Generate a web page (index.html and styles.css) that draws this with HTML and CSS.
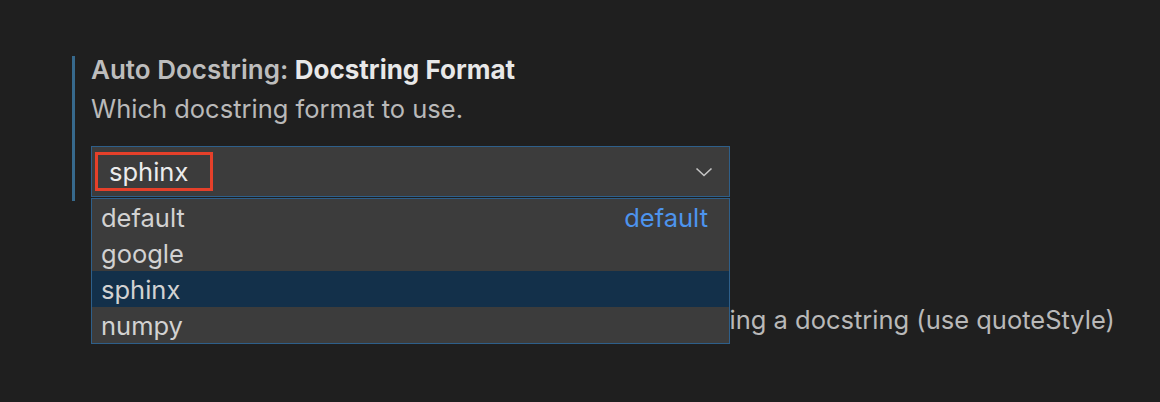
FILE: index.html
```html
<!DOCTYPE html>
<html lang="en">
<head>
<meta charset="utf-8">
<title>Settings</title>
<link rel="stylesheet" href="styles.css">
</head>
<body>
<div class="settings">
  <div class="setting focused">
    <div class="title"><span class="cat">Auto Docstring: </span><span class="name">Docstring Format</span></div>
    <div class="desc">Which docstring format to use.</div>
    <div class="select-wrap">
      <div class="select">
        <span class="mark"><span class="value">sphinx</span></span>
        <svg class="chev" width="18" height="10" viewBox="0 0 18 10"><path d="M1.5 1.5 L9 8.5 L16.5 1.5" fill="none" stroke="#c5c5c5" stroke-width="1.6"/></svg>
      </div>
      <ul class="dropdown">
        <li class="opt"><span>default</span><span class="tag">default</span></li>
        <li class="opt"><span>google</span></li>
        <li class="opt selected"><span>sphinx</span></li>
        <li class="opt"><span>numpy</span></li>
      </ul>
    </div>
  </div>
  <div class="setting">
    <div class="title"><span class="cat">Auto Docstring: </span><span class="name">Generate Docstring On Enter</span></div>
    <div class="bool"><span class="checkbox"></span><span class="desc">Generate docstring on pressing enter after opening a docstring (use quoteStyle)</span></div>
  </div>
</div>
</body>
</html>
```
FILE: styles.css
```css
html, body {
  margin: 0;
  padding: 0;
  background: #1f1f1f;
  height: 100%;
  overflow: hidden;
}
body {
  font-family: Inter, "Noto Sans", "Liberation Sans", sans-serif;
  color: #cccccc;
}
.settings {
  padding-top: 56px;
  padding-left: 72px;
  width: 1080px;
}
.setting {
  border-left: 3px solid transparent;
  padding-left: 16px;
  padding-bottom: 4px;
}
.setting.focused {
  border-left-color: #37698c;
}
.title {
  font-size: 26px;
  line-height: 28px;
  height: 28px;
  font-weight: 600;
  white-space: nowrap;
}
.cat {
  color: #bdbdbd;
}
.name {
  color: #e8e8e8;
  font-weight: 700;
}
.desc {
  font-size: 25.5px;
  line-height: 30px;
  color: #b9b9b9;
  margin-top: 10px;
  white-space: nowrap;
}
.select-wrap {
  position: relative;
  width: 639px;
  margin-top: 22px;
}
.select {
  box-sizing: border-box;
  height: 51px;
  background: #3c3c3c;
  border: 1px solid #2e5f8a;
  display: flex;
  align-items: center;
  justify-content: space-between;
  padding: 0 16px 0 3px;
}
.mark {
  box-sizing: border-box;
  width: 118px;
  height: 39px;
  border: 3px solid #e5402a;
  display: flex;
  align-items: center;
  padding-left: 11px;
}
.value {
  font-size: 25.5px;
  color: #ececec;
}
.chev {
  display: block;
}
.dropdown {
  position: absolute;
  top: 100%;
  left: 0;
  right: 0;
  margin: 1px 0 0;
  padding: 0;
  list-style: none;
  background: #3c3c3c;
  border: 1px solid #2e5f8a;
  z-index: 2;
}
.opt {
  height: 36px;
  display: flex;
  align-items: center;
  justify-content: space-between;
  padding: 0 21px 0 9px;
  font-size: 25.5px;
  color: #d2d2d2;
}
.opt.selected {
  background: #13304a;
}
.tag {
  color: #4d94ee;
}
.setting + .setting {
  margin-top: 66px;
}
.bool {
  display: flex;
  align-items: center;
  margin-top: 10px;
}
.bool .desc {
  margin-top: 0;
}
.checkbox {
  box-sizing: border-box;
  width: 30px;
  height: 30px;
  border: 1px solid #6b6b6b;
  background: #313131;
  border-radius: 5px;
  margin-right: 28px;
  flex: none;
}
```
